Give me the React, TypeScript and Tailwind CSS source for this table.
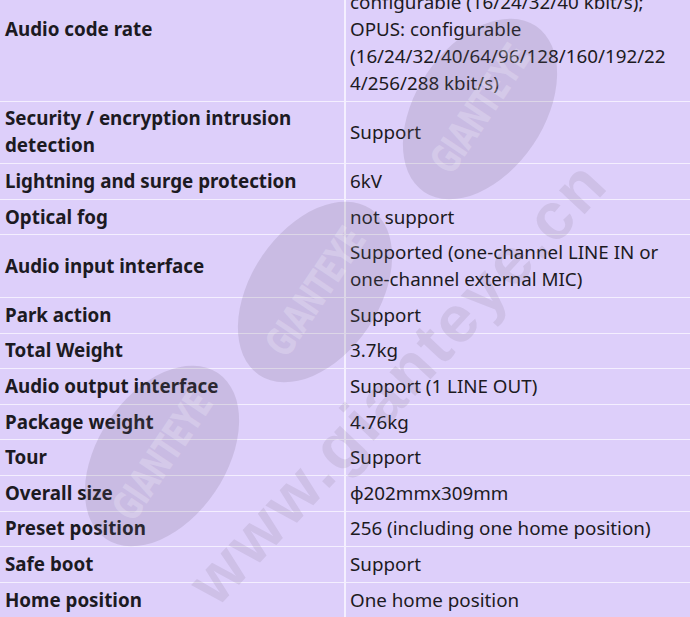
const ROWS: [string, string[]][] = [
  [
    "Audio code rate",
    [
      "G.711: 64 kbit/s; G.722.1: 16 kbit/s; G.726:",
      "configurable (16/24/32/40 kbit/s);",
      "OPUS: configurable",
      "(16/24/32/40/64/96/128/160/192/22",
      "4/256/288 kbit/s)",
    ],
  ],
  ["Security / encryption intrusion detection", ["Support"]],
  ["Lightning and surge protection", ["6kV"]],
  ["Optical fog", ["not support"]],
  ["Audio input interface", ["Supported (one-channel LINE IN or", "one-channel external MIC)"]],
  ["Park action", ["Support"]],
  ["Total Weight", ["3.7kg"]],
  ["Audio output interface", ["Support (1 LINE OUT)"]],
  ["Package weight", ["4.76kg"]],
  ["Tour", ["Support"]],
  ["Overall size", ["φ202mmx309mm"]],
  ["Preset position", ["256 (including one home position)"]],
  ["Safe boot", ["Support"]],
  ["Home position", ["One home position"]],
];

function Badge({ className }: { className: string }) {
  return (
    <div
      className={`pointer-events-none absolute flex h-[128px] w-[200px] -rotate-[56deg] items-center justify-center rounded-[50%] bg-[rgba(110,100,120,0.18)] ${className}`}
    >
      <span className="scale-x-75 text-[40px] font-bold tracking-tight text-[rgba(255,255,255,0.22)] [font-family:'Liberation_Sans_Narrow','DejaVu_Sans_Condensed',sans-serif]">
        GIANTEYE
      </span>
    </div>
  );
}

export default function App() {
  return (
    <div className="relative h-[617px] w-[690px] overflow-hidden bg-[#ddcffa] text-[18.8px] leading-[27px] text-[#1c1a22] [font-family:'Noto_Sans','Open_Sans',sans-serif]">
      <table className="-mt-[42px] w-full table-fixed border-collapse">
        <colgroup>
          <col className="w-[345px]" />
          <col />
        </colgroup>
        <tbody>
          {ROWS.map(([label, value]) => (
            <tr key={label} className="border-b border-[#f4efff]">
              <td className="border-r-2 border-[#f4efff] px-[5px] py-[3.8px] align-middle font-bold">{label}</td>
              <td className="px-[4px] py-[3.8px] align-middle">
                {value.map((line) => (
                  <div key={line} className="whitespace-nowrap">
                    {line}
                  </div>
                ))}
              </td>
            </tr>
          ))}
        </tbody>
      </table>

      <Badge className="left-[380px] top-[45px]" />
      <Badge className="left-[215px] top-[228px]" />
      <Badge className="left-[62px] top-[392px]" />

      <div className="pointer-events-none absolute left-[200px] top-[560px] origin-left -rotate-[47deg] whitespace-nowrap text-[66px] font-bold leading-[66px] tracking-[3px] text-[rgba(120,110,130,0.15)] [font-family:'Liberation_Sans',sans-serif]">
        www.gianteye.cn
      </div>
    </div>
  );
}
